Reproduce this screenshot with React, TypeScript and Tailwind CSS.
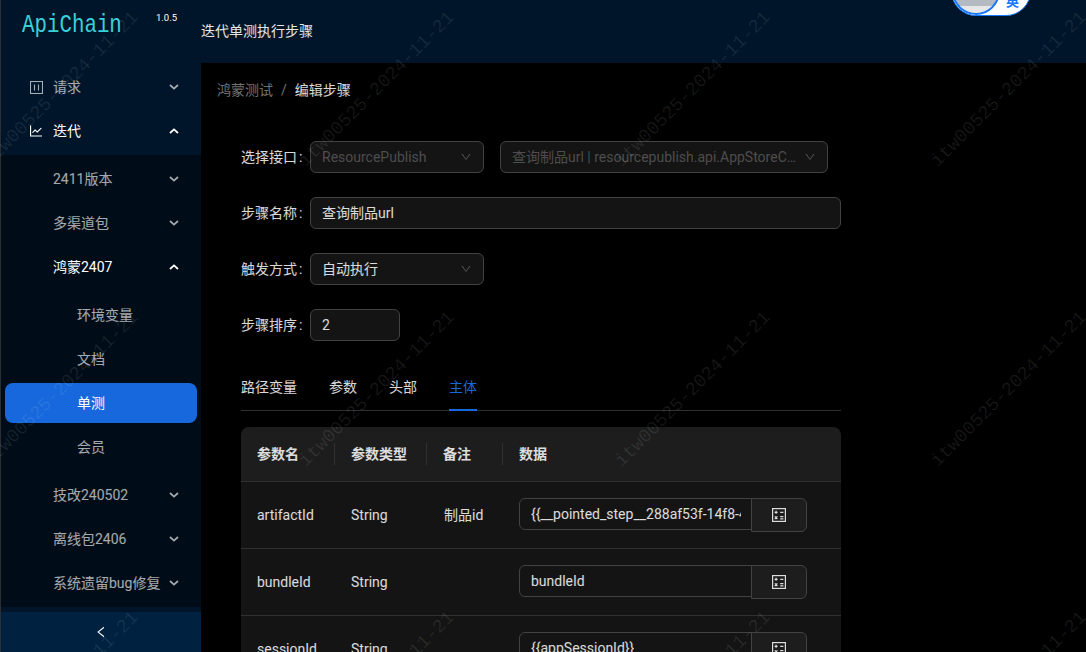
import { AiOutlineDown, AiOutlineLineChart, AiOutlineLeft } from "react-icons/ai";

const wm = Array.from({ length: 12 });

function Chevron({ up }: { up?: boolean }) {
  return (
    <svg width="10" height="6" viewBox="0 0 10 6" fill="none" stroke="currentColor" strokeWidth="1.7" className="shrink-0">
      <path d={up ? "M1 5 L5 1.4 L9 5" : "M1 1 L5 4.6 L9 1"} />
    </svg>
  );
}

function Row({ label, open, active }: { label: string; open?: boolean; active?: boolean }) {
  return (
    <div className={`h-10 mb-1 flex items-center justify-between pr-[22px] pl-[52px] ${active ? "text-white" : "text-white/65"}`}>
      <span className="whitespace-nowrap">{label}</span>
      <Chevron up={open} />
    </div>
  );
}

function Leaf({ label, active }: { label: string; active?: boolean }) {
  return (
    <div className={`h-10 mb-1 ml-[4px] mr-1 rounded-lg flex items-center pl-[72px] ${active ? "bg-[#1668dc] text-white" : "text-white/65"}`}>
      {label}
    </div>
  );
}

function SelectBox({ text, w, dim }: { text: string; w: string; dim?: boolean }) {
  return (
    <div className={`${w} h-8 rounded-md border border-[#424242] flex items-center justify-between pl-[11px] pr-[11px] ${dim ? "bg-white/[0.08] text-white/25" : "bg-[#141414] text-white/85"}`}>
      <span className="truncate">{text}</span>
      <AiOutlineDown className="text-[12px] shrink-0 ml-1 text-white/25" />
    </div>
  );
}

function FormRow({ label, children }: { label: string; children: React.ReactNode }) {
  return (
    <div className="flex items-center h-8 mb-6">
      <span className="w-[69px] text-white/85 whitespace-nowrap">
        {label}
        <span className="ml-[2px]">:</span>
      </span>
      {children}
    </div>
  );
}

function Calc() {
  return (
    <svg width="14" height="14" viewBox="0 0 14 14" fill="none" stroke="currentColor" strokeWidth="1.2" className="text-white/85">
      <rect x="0.6" y="0.6" width="12.8" height="12.8" />
      <path d="M2.6 4.3h3M4.1 2.8v3M8.2 4.3h3.2M2.8 8.4l2.6 2.6M5.4 8.4l-2.6 2.6M8.2 8.7h3.2M8.2 10.8h3.2" />
    </svg>
  );
}

function DataRow({ name, type, note, value }: { name: string; type: string; note?: string; value: string }) {
  return (
    <div className="h-[67px] bg-[#141414] border-b border-[#303030] flex items-center text-white/85 shrink-0">
      <span className="w-[94px] pl-4">{name}</span>
      <span className="w-[93px] pl-4 pr-0">{type}</span>
      <span className="w-[75px] pl-4">{note}</span>
      <div className="flex pl-4 items-start">
        <div className="w-[233px] h-8 rounded-l-md border border-[#424242] bg-[#141414] flex items-center pl-[11px] pr-[10px] overflow-hidden whitespace-nowrap">
          <span className="overflow-hidden">{value}</span>
        </div>
        <div className="w-[56px] h-[34px] -ml-px rounded-r-md border border-[#424242] bg-white/[0.04] flex items-center justify-center">
          <Calc />
        </div>
      </div>
    </div>
  );
}

export default function App() {
  return (
    <div className="relative w-[1086px] h-[652px] overflow-hidden bg-black flex text-[14px] font-['Roboto','Noto_Sans_CJK_SC',sans-serif]">
      <aside className="w-[201px] shrink-0 h-full bg-[#001529] flex flex-col border-l border-[#2a2f35]">
        <div className="h-[67px] shrink-0 relative">
          <span className="absolute left-[21px] top-[9px] text-[26px] leading-8 origin-left scale-x-[0.8] font-['Liberation_Mono',monospace] text-[#3ad0d8]">ApiChain</span>
          <span className="absolute left-[155px] top-[11px] text-[9.5px] leading-[14px] text-white">1.0.5</span>
        </div>
        <div className="shrink-0">
          <div className="h-10 mb-1 flex items-center justify-between pl-[29px] pr-[22px] text-white/65">
            <span className="flex items-center gap-[10px]">
              <svg width="13" height="13" viewBox="0 0 13 13" fill="none" stroke="currentColor" className="shrink-0">
                <rect x="0.5" y="0.5" width="12" height="12" strokeWidth="1.1" />
                <path d="M4.5 3.5v6M8.5 3.5v6" strokeWidth="1.1" />
              </svg>
              请求
            </span>
            <Chevron />
          </div>
          <div className="h-10 flex items-center justify-between pl-[27px] pr-[22px] text-white">
            <span className="flex items-center gap-[9px]">
              <AiOutlineLineChart className="text-[16px]" />
              迭代
            </span>
            <Chevron up />
          </div>
        </div>
        <div className="mt-1 pt-1 bg-[#000c17] h-[452px] shrink-0">
          <Row label="2411版本" />
          <Row label="多渠道包" />
          <Row label="鸿蒙2407" open active />
          <div className="h-1" />
          <Leaf label="环境变量" />
          <Leaf label="文档" />
          <Leaf label="单测" active />
          <Leaf label="会员" />
          <div className="h-1" />
          <Row label="技改240502" />
          <Row label="离线包2406" />
          <Row label="系统遗留bug修复" />
        </div>
        <div className="h-[5px] shrink-0" />
        <div className="flex-1 bg-[#002140] flex items-center justify-center text-white">
          <AiOutlineLeft className="text-[14px]" />
        </div>
      </aside>

      <div className="flex-1 flex flex-col min-w-0">
        <header className="h-[63px] shrink-0 bg-[#001529] relative flex items-center">
          <span className="text-white/90">迭代单测执行步骤</span>
          <div className="absolute left-[750px] -top-[34px] w-[80px] h-[50px] rounded-full bg-white border border-[#1677ff] overflow-hidden flex items-end justify-end pr-[11px] pb-[5px]">
            <span className="text-[13px] leading-4 font-bold text-[#1677ff]">英</span>
            <div className="absolute left-0 top-0 w-[48px] h-[48px] rounded-full border-2 border-[#1677ff] bg-[#b4bac1] overflow-hidden flex items-end">
              <div className="w-full h-[7px] bg-[#e6e7e9]" />
            </div>
          </div>
        </header>
        <main className="flex-1 pl-4 pt-[17px] min-h-0 overflow-hidden">
          <div className="text-white/45 h-5 leading-5">
            鸿蒙测试<span className="mx-2">/</span><span className="text-white/85">编辑步骤</span>
          </div>
          <div className="pl-6 pt-[41px] w-[624px]">
            <FormRow label="选择接口">
              <div className="flex gap-4">
                <SelectBox text="ResourcePublish" w="w-[174px]" dim />
                <SelectBox text="查询制品url | resourcepublish.api.AppStoreConnect" w="w-[328px]" dim />
              </div>
            </FormRow>
            <FormRow label="步骤名称">
              <div className="flex-1 h-8 rounded-md border border-[#424242] bg-[#141414] text-white/85 flex items-center px-[11px]">查询制品url</div>
            </FormRow>
            <FormRow label="触发方式">
              <SelectBox text="自动执行" w="w-[174px]" />
            </FormRow>
            <FormRow label="步骤排序">
              <div className="w-[90px] h-8 rounded-md border border-[#424242] bg-[#141414] text-white/85 flex items-center px-[11px]">2</div>
            </FormRow>
            <div className="flex gap-8 h-[46px] border-b border-[#303030] pt-[12px] text-white/85">
              <span>路径变量</span>
              <span>参数</span>
              <span>头部</span>
              <span className="relative text-[#1668dc] h-[34px]">
                主体
                <span className="absolute left-0 right-0 bottom-0 h-0.5 bg-[#1668dc]" />
              </span>
            </div>
            <div className="mt-4 rounded-lg overflow-hidden flex flex-col">
              <div className="h-[55px] shrink-0 bg-[#1d1d1d] border-b border-[#303030] flex items-center font-semibold text-white/85">
                <span className="w-[94px] pl-4 h-[22px] leading-[22px] border-r border-[#303030]">参数名</span>
                <span className="w-[92px] pl-4 h-[22px] leading-[22px] border-r border-[#303030]">参数类型</span>
                <span className="w-[76px] pl-4 h-[22px] leading-[22px] border-r border-[#303030]">备注</span>
                <span className="pl-4">数据</span>
              </div>
              <DataRow name="artifactId" type="String" note="制品id" value="{{__pointed_step__288af53f-14f8-4" />
              <DataRow name="bundleId" type="String" value="bundleId" />
              <DataRow name="sessionId" type="String" value="{{appSessionId}}" />
            </div>
          </div>
        </main>
      </div>

      <div className="absolute -left-[97px] -top-[60px] w-[1264px] h-[900px] grid grid-cols-[repeat(4,316px)] grid-rows-[repeat(3,300px)] pointer-events-none overflow-hidden">
        {wm.map((_, i) => (
          <div key={i} className="flex items-center justify-center">
            <span className="-rotate-45 whitespace-nowrap text-[18.5px] font-['Liberation_Mono',monospace] text-white/[0.09]">itw00525-2024-11-21</span>
          </div>
        ))}
      </div>
    </div>
  );
}
